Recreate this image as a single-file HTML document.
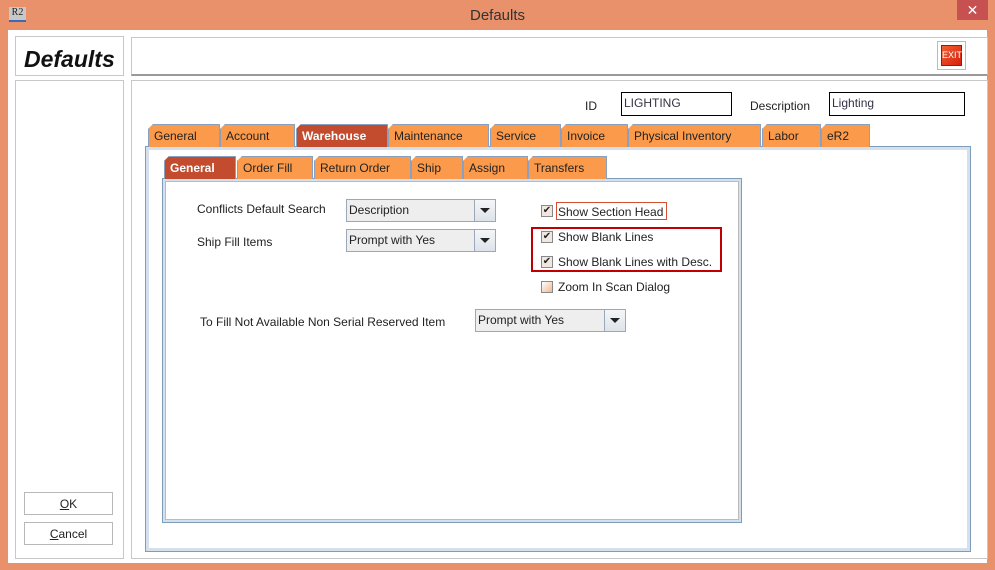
<!DOCTYPE html>
<html><head><style>
*{box-sizing:border-box;margin:0;padding:0}
body{width:995px;height:570px;background:#E8916A;position:relative;font-family:"Liberation Sans",Arial,sans-serif;font-size:12px;color:#222;overflow:hidden}
.a{position:absolute}
.box{position:absolute;background:#fff;border:1px solid #c8c8c8}
.tab{position:absolute;height:23px;background:#FB9A4B;border:1px solid #8aa0c0;border-bottom:none;padding:4px 0 0 5px;font-size:12px;color:#222;clip-path:polygon(5px 0,100% 0,100% 100%,0 100%,0 5px)}
.tab.s{background:#C44C2E;color:#fff;font-weight:bold}
.combo{position:absolute;height:23px;border:1px solid #9aa8b8;background:#eee;padding:3px 0 0 2px}
.combo .b{position:absolute;right:0;top:0;width:21px;height:21px;border-left:1px solid #9aa8b8;background:linear-gradient(#f4f6f8,#dde3ea)}
.combo .b:after{content:"";position:absolute;left:5px;top:8px;border-left:5px solid transparent;border-right:5px solid transparent;border-top:5px solid #222}
.cb{position:absolute;width:12px;height:12px;border:1px solid #888;background:#f0e8e0;font-size:10px;line-height:10px;text-align:center}
.btn{position:absolute;border:1px solid #b8b8b8;background:#fff;text-align:center;padding-top:4px}
</style></head><body>
<div class="a" style="left:9px;top:7px;width:17px;height:15px;background:#c8c8c8;border-bottom:2px solid #3a6ab8;font-size:10px;font-family:'Liberation Serif',serif;text-align:center">R2</div>
<div class="a" style="left:0;top:7px;width:995px;text-align:center;font-size:15px;color:#333">Defaults</div>
<div class="a" style="left:957px;top:0;width:31px;height:20px;background:#C75050;color:#fff;text-align:center;font-size:14px;line-height:20px">✕</div>
<div class="a" style="left:8px;top:30px;width:979px;height:533px;background:#fff"></div>
<div class="box" style="left:15px;top:36px;width:109px;height:40px;padding:9px 0 0 8px;font-size:23px;font-style:italic;font-weight:bold;color:#111">Defaults</div>
<div class="box" style="left:15px;top:80px;width:109px;height:479px"></div>
<div class="box" style="left:131px;top:37px;width:857px;height:39px;border-bottom:2px solid #999"></div>
<div class="a" style="left:937px;top:41px;width:29px;height:29px;border:1px solid #bbb;padding:3px"><div style="width:21px;height:21px;background:linear-gradient(135deg,#f06030,#d82010);border:1px solid #a01808;color:#fff;font-size:9px;text-align:center;line-height:19px">EXIT</div></div>
<div class="box" style="left:131px;top:80px;width:857px;height:479px"></div>
<div class="a" style="left:585px;top:99px">ID</div>
<div class="a" style="left:621px;top:92px;width:111px;height:24px;border:1px solid #000;padding:3px 2px;color:#334">LIGHTING</div>
<div class="a" style="left:750px;top:99px">Description</div>
<div class="a" style="left:829px;top:92px;width:136px;height:24px;border:1px solid #000;padding:3px 2px;color:#334">Lighting</div>
<div class="a" style="left:145px;top:146px;width:826px;height:406px;border:1px solid #7f9db9;background:#fff;box-shadow:inset 0 0 0 3px #d4e0ee"></div>
<div class="tab" style="left:148px;top:124px;width:72px">General</div>
<div class="tab" style="left:220px;top:124px;width:75px">Account</div>
<div class="tab s" style="left:296px;top:124px;width:92px">Warehouse</div>
<div class="tab" style="left:388px;top:124px;width:101px">Maintenance</div>
<div class="tab" style="left:490px;top:124px;width:71px">Service</div>
<div class="tab" style="left:561px;top:124px;width:67px">Invoice</div>
<div class="tab" style="left:628px;top:124px;width:133px">Physical Inventory</div>
<div class="tab" style="left:762px;top:124px;width:59px">Labor</div>
<div class="tab" style="left:821px;top:124px;width:49px">eR2</div>
<div class="a" style="left:162px;top:178px;width:580px;height:345px;border:1px solid #7f9db9;background:#fff;box-shadow:inset 0 0 0 2px #d4e0ee"></div>
<div class="a" style="left:165px;top:181px;width:574px;height:339px;border:1px solid #bbb"></div>
<div class="tab s" style="left:164px;top:156px;width:72px">General</div>
<div class="tab" style="left:237px;top:156px;width:76px">Order Fill</div>
<div class="tab" style="left:314px;top:156px;width:97px">Return Order</div>
<div class="tab" style="left:411px;top:156px;width:52px">Ship</div>
<div class="tab" style="left:463px;top:156px;width:65px">Assign</div>
<div class="tab" style="left:528px;top:156px;width:79px">Transfers</div>
<div class="a" style="left:197px;top:202px">Conflicts Default Search</div>
<div class="combo" style="left:346px;top:199px;width:150px">Description<div class="b"></div></div>
<div class="a" style="left:197px;top:235px">Ship Fill Items</div>
<div class="combo" style="left:346px;top:229px;width:150px">Prompt with Yes<div class="b"></div></div>
<div class="a" style="left:200px;top:315px">To Fill Not Available Non Serial Reserved Item</div>
<div class="combo" style="left:475px;top:309px;width:151px">Prompt with Yes<div class="b"></div></div>
<div class="cb" style="left:541px;top:205px">✔</div>
<div class="a" style="left:556px;top:202px;width:111px;height:18px;border:1px solid #d05030;padding:2px 0 0 1px">Show Section Head</div>
<div class="a" style="left:531px;top:227px;width:191px;height:45px;border:2px solid #c00000"></div>
<div class="cb" style="left:541px;top:231px">✔</div>
<div class="a" style="left:558px;top:230px">Show Blank Lines</div>
<div class="cb" style="left:541px;top:256px">✔</div>
<div class="a" style="left:558px;top:255px">Show Blank Lines with Desc.</div>
<div class="cb" style="left:541px;top:281px;background:linear-gradient(135deg,#fff,#f0b890)"></div>
<div class="a" style="left:558px;top:280px">Zoom In Scan Dialog</div>
<div class="btn" style="left:24px;top:492px;width:89px;height:23px"><u>O</u>K</div>
<div class="btn" style="left:24px;top:522px;width:89px;height:23px"><u>C</u>ancel</div>
</body></html>
